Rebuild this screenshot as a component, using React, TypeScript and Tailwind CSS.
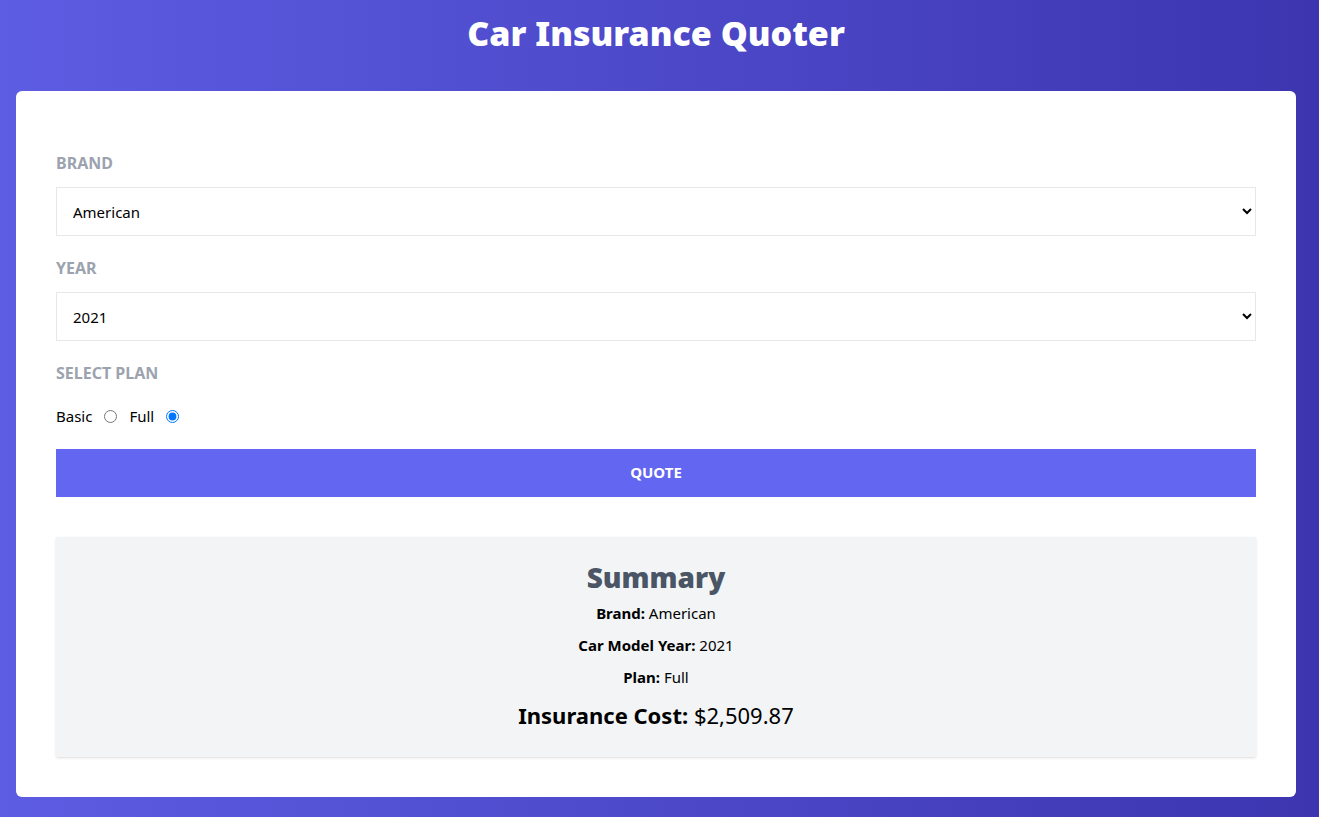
import React, { useState } from "react";

export default function App() {
  const [brand, setBrand] = useState("American");
  const [year, setYear] = useState("2021");
  const [plan, setPlan] = useState("full");

  return (
    <div
      className="min-h-screen w-full bg-gradient-to-r from-[#5d5de3] to-[#3d35b0] pl-4 pr-[23px] pb-5"
      style={{ fontFamily: '"Noto Sans", "Open Sans", sans-serif' }}
    >
      <h1 className="pt-[13px] pb-[38px] text-center text-[34px] leading-[40px] font-black text-white">
        Car Insurance Quoter
      </h1>
      <div className="rounded-md bg-white px-10 pt-[60px] pb-10">
        <form onSubmit={(e) => e.preventDefault()}>
          <div className="mb-5">
            <label className="mb-3 block text-[16px] leading-6 font-bold uppercase text-[#9ca3af]">
              Brand
            </label>
            <select
              value={brand}
              onChange={(e) => setBrand(e.target.value)}
              className="h-[49px] w-full border border-gray-200 bg-white pl-[12px] pr-[13px] text-[15px] text-black"
            >
              <option value="European">European</option>
              <option value="American">American</option>
              <option value="Asian">Asian</option>
            </select>
          </div>
          <div className="mb-5">
            <label className="mb-3 block text-[16px] leading-6 font-bold uppercase text-[#9ca3af]">
              Year
            </label>
            <select
              value={year}
              onChange={(e) => setYear(e.target.value)}
              className="h-[49px] w-full border border-gray-200 bg-white pl-[12px] pr-[13px] text-[15px] text-black"
            >
              {["2021", "2020", "2019", "2018", "2017"].map((y) => (
                <option key={y} value={y}>
                  {y}
                </option>
              ))}
            </select>
          </div>
          <div className="mb-5">
            <label className="mb-3 block text-[16px] leading-6 font-bold uppercase text-[#9ca3af]">
              Select Plan
            </label>
            <div className="flex items-center gap-3 pt-[8px] text-[15px] text-black">
              <label>Basic</label>
              <input
                type="radio"
                name="plan"
                value="basic"
                checked={plan === "basic"}
                onChange={() => setPlan("basic")}
                className="m-0 h-[13px] w-[13px]"
              />
              <label>Full</label>
              <input
                type="radio"
                name="plan"
                value="full"
                checked={plan === "full"}
                onChange={() => setPlan("full")}
                className="m-0 h-[13px] w-[13px]"
              />
            </div>
          </div>
          <button
            type="submit"
            className="mt-[1px] h-12 w-full bg-[#6366f1] text-[15px] font-bold uppercase text-white"
          >
            Quote
          </button>
        </form>
        <div className="mt-10 bg-gray-100 px-4 pt-[20px] pb-[26px] text-center text-black shadow-sm">
          <h2 className="text-[28px] leading-[40px] font-black text-gray-600">Summary</h2>
          <p className="text-[15px] leading-8">
            <span className="font-bold">Brand:</span> American
          </p>
          <p className="text-[15px] leading-8">
            <span className="font-bold">Car Model Year:</span> 2021
          </p>
          <p className="text-[15px] leading-8">
            <span className="font-bold">Plan:</span> Full
          </p>
          <p className="mt-[6px] text-[22px] leading-8">
            <span className="font-bold">Insurance Cost:</span> $2,509.87
          </p>
        </div>
      </div>
    </div>
  );
}
